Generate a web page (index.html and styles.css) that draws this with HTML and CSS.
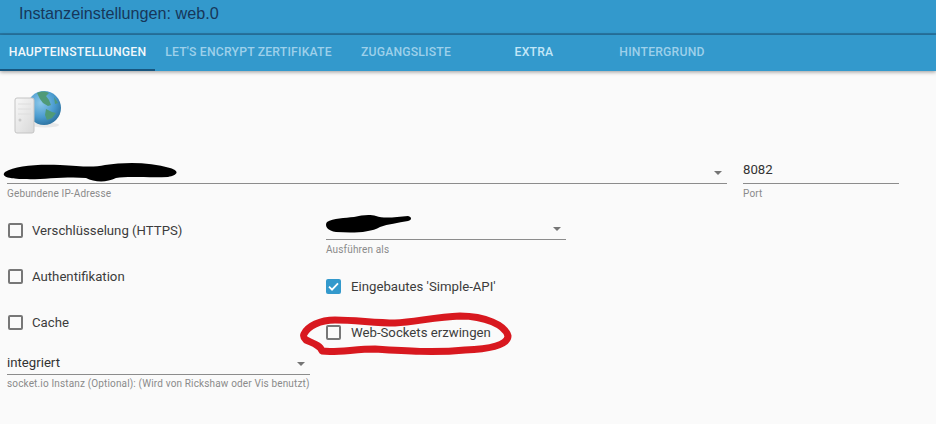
FILE: index.html
```html
<!DOCTYPE html>
<html lang="de">
<head>
    <meta charset="UTF-8" />
    <title>Instanzeinstellungen: web.0</title>
    <link rel="stylesheet" href="styles.css">
</head>
<body>
    <div class="page">
        <header class="title-bar">Instanzeinstellungen: web.0</header>
        <nav class="tabs">
            <div class="tab tab-main active">Haupteinstellungen</div>
            <div class="tab tab-cert">Let's Encrypt Zertifikate</div>
            <div class="tab tab-list">Zugangsliste</div>
            <div class="tab tab-extra">Extra</div>
            <div class="tab tab-bg">Hintergrund</div>
        </nav>
        <main class="content">
            <svg class="logo" width="50" height="46" viewBox="0 0 50 46">
                <defs>
                    <radialGradient id="globe" cx="0.4" cy="0.35" r="0.7">
                        <stop offset="0" stop-color="#8cc8ea" />
                        <stop offset="0.6" stop-color="#4a9bcf" />
                        <stop offset="1" stop-color="#2a6f9c" />
                    </radialGradient>
                    <linearGradient id="tower" x1="0" y1="0" x2="1" y2="1">
                        <stop offset="0" stop-color="#f8f8f8" />
                        <stop offset="1" stop-color="#d8d8d8" />
                    </linearGradient>
                </defs>
                <ellipse cx="31" cy="36" rx="14" ry="2.5" fill="#e8e8e8" />
                <circle cx="30" cy="19" r="17" fill="url(#globe)" />
                <path d="M23 4c4-2 9-2 12 0l-3 3 3 4 2 5-3 1-5-3-3-4zM32 20l6 3 4 1-4 5-5 2-2-5zM40 8l4 6-3 1z" fill="#4f9a78" />
                <rect x="1" y="9" width="19" height="35" rx="2" fill="url(#tower)" stroke="#c4c4c4" />
                <path d="M4 15h13M4 20h13M4 25h13" stroke="#dedede" />
                <circle cx="6" cy="31" r="1.5" fill="#cacaca" />
            </svg>
            <div class="ip-row">
                <div class="field field-ip">
                    <div class="field-value"><span class="arrow"></span></div>
                    <div class="field-help">Gebundene IP-Adresse</div>
                </div>
                <div class="field field-port">
                    <div class="field-value">8082</div>
                    <div class="field-help">Port</div>
                </div>
            </div>
            <div class="columns">
                <div class="col col-left">
                    <label class="check"><span class="box"></span>Verschlüsselung (HTTPS)</label>
                    <label class="check"><span class="box"></span>Authentifikation</label>
                    <label class="check"><span class="box"></span>Cache</label>
                    <div class="field field-socket">
                        <div class="field-value">integriert<span class="arrow"></span></div>
                        <div class="field-help">socket.io Instanz (Optional): (Wird von Rickshaw oder Vis benutzt)</div>
                    </div>
                </div>
                <div class="col col-right">
                    <div class="field field-user">
                        <div class="field-value"><span class="arrow"></span></div>
                        <div class="field-help">Ausführen als</div>
                    </div>
                    <label class="check check-api">
                        <span class="box box-on">
                            <svg width="15" height="15" viewBox="0 0 15 15"><path d="M3 7.6l3 3 6-6.2" fill="none" stroke="#fff" stroke-width="1.8" /></svg>
                        </span>Eingebautes 'Simple-API'
                    </label>
                    <label class="check"><span class="box"></span>Web-Sockets erzwingen</label>
                </div>
            </div>
        </main>
        <!-- scribbles drawn over the screenshot -->
        <svg class="marks" width="936" height="424" viewBox="0 0 936 424">
            <path d="M5 172c10-6 30-8 55-7 20 1 32 3 45 0 20-3 45-3 65 3 10 3 8 7-2 9-18 1-40-1-52 1-10 5-22 4-30 0-20-2-45 2-62 1-13 0-24-2-19-7z" fill="#000" />
            <path d="M327 222c6-4 18-4 27-5 8-2 16-3 22-1 8 3 20 1 32 0 4 1 4 4 0 5-10 2-20 3-28 6-10 6-28 6-44 5-8-1-12-6-9-10z" fill="#000" />
            <path d="M304 334C308 326 320 320 335 320C355 320 375 323 395 323C415 322 435 317 460 316C485 316 505 325 508 336C508 345 490 349 465 350C435 353 405 351 375 349C355 349 335 353 322 351C320 345 312 343 306 340C304 338 303 336 304 334Z" fill="none" stroke="#d8181f" stroke-width="7" stroke-linejoin="round" />
        </svg>
    </div>
</body>
</html>
```
FILE: styles.css
```css
body {
    margin: 0;
    background: #fafafa;
    font-family: Roboto, "Liberation Sans", sans-serif;
    color: #333;
    overflow: hidden;
}

.page {
    position: relative;
    width: 936px;
    height: 424px;
    overflow: hidden;
}

.title-bar {
    height: 33px;
    padding-left: 19px;
    background: #3399cc;
    border-bottom: 2px solid #2878a5;
    color: #17375a;
    font-family: "Liberation Sans", Arial, sans-serif;
    font-size: 16.2px;
    line-height: 27px;
}

.tabs {
    display: flex;
    height: 36px;
    background: #3399cc;
    box-shadow: 0 1px 4px rgba(0, 0, 0, 0.4);
}

.tab {
    box-sizing: border-box;
    height: 36px;
    padding-top: 10px;
    text-align: center;
    color: #9dd0ea;
    font-size: 12.2px;
    font-weight: 500;
    line-height: 14px;
    letter-spacing: 0.2px;
    text-transform: uppercase;
    white-space: nowrap;
}

.tab.active {
    color: #f2f8fb;
    border-bottom: 2px solid #17567f;
}

.tab-main { width: 155px; }
.tab-cert { width: 187px; }
.tab-list { width: 128px; }
.tab-extra { width: 80px; margin-left: 24px; color: #c2e6f7; }
.tab-bg { width: 176px; }

.content {
    padding: 18px 0 0 7px;
}

.logo {
    display: block;
    margin: 0 0 0 7px;
}

.ip-row {
    display: flex;
    gap: 16px;
    margin-top: 22px;
}

.field-value {
    position: relative;
    height: 26px;
    border-bottom: 1px solid #8c8c8c;
    font-size: 13.2px;
    line-height: 26px;
    color: #333;
}

.field-help {
    margin-top: 4px;
    font-size: 10px;
    line-height: 12px;
    letter-spacing: 0.15px;
    color: #8a8a8a;
    white-space: nowrap;
}

.field-ip { width: 720px; }
.field-port { width: 156px; }
.field-socket { width: 303px; margin-top: 15px; }
.field-socket .field-value { line-height: 30px; }
.field-socket .field-help { margin-top: 3px; }
.field-user { width: 240px; }

.arrow {
    position: absolute;
    right: 5px;
    top: 14px;
    border-left: 4.5px solid transparent;
    border-right: 4.5px solid transparent;
    border-top: 4.5px solid #757575;
}

.columns {
    display: flex;
    margin-top: 22px;
}

.col-left { width: 319px; }

.col-right { margin-top: -9px; }

.check {
    display: flex;
    align-items: center;
    height: 16px;
    margin-bottom: 30px;
    font-size: 13.2px;
    color: #3c3c3c;
    white-space: nowrap;
}

.col-left .check { margin-left: 1px; }

.col-left .check:nth-child(3) { margin-bottom: 18px; }

.col-left .box { margin-right: 9px; }

.check-api { margin-top: 22px; }

.box {
    flex: none;
    box-sizing: border-box;
    width: 15px;
    height: 15px;
    margin-right: 10px;
    border: 2px solid #777;
    border-radius: 2px;
}

.box-on {
    border: none;
    background: #3399cc;
}

.box-on svg { display: block; }

.marks {
    position: absolute;
    left: 0;
    top: 0;
}
```
